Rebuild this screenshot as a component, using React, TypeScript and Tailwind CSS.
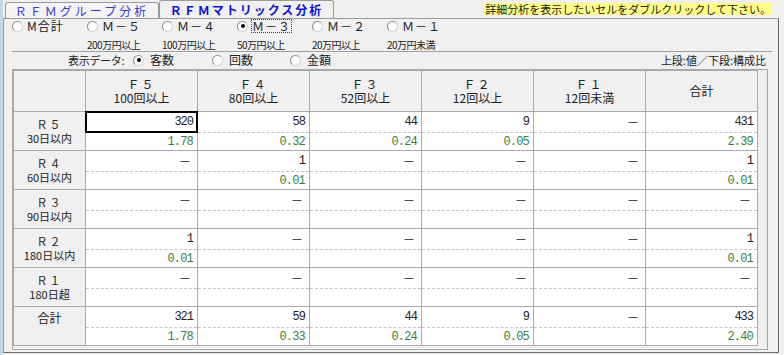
import React from "react";

const JP = "font-['MS_UI_Gothic','Noto_Sans_CJK_JP',sans-serif]";
const MONO = "font-['Liberation_Mono','DejaVu_Sans_Mono',monospace]";

type Cell = { v: string; p: string };

const COLS = [
  { k: "Ｆ５", s: "100回以上" },
  { k: "Ｆ４", s: "80回以上" },
  { k: "Ｆ３", s: "52回以上" },
  { k: "Ｆ２", s: "12回以上" },
  { k: "Ｆ１", s: "12回未満" },
];

const D = "－";
const dash: Cell = { v: D, p: "" };

const ROWS: { k: string; s: string; cells: Cell[] }[] = [
  {
    k: "Ｒ５",
    s: "30日以内",
    cells: [
      { v: "320", p: "1.78" },
      { v: "58", p: "0.32" },
      { v: "44", p: "0.24" },
      { v: "9", p: "0.05" },
      dash,
      { v: "431", p: "2.39" },
    ],
  },
  {
    k: "Ｒ４",
    s: "60日以内",
    cells: [dash, { v: "1", p: "0.01" }, dash, dash, dash, { v: "1", p: "0.01" }],
  },
  { k: "Ｒ３", s: "90日以内", cells: [dash, dash, dash, dash, dash, dash] },
  {
    k: "Ｒ２",
    s: "180日以内",
    cells: [{ v: "1", p: "0.01" }, dash, dash, dash, dash, { v: "1", p: "0.01" }],
  },
  { k: "Ｒ１", s: "180日超", cells: [dash, dash, dash, dash, dash, dash] },
  {
    k: "合計",
    s: "",
    cells: [
      { v: "321", p: "1.78" },
      { v: "59", p: "0.33" },
      { v: "44", p: "0.24" },
      { v: "9", p: "0.05" },
      dash,
      { v: "433", p: "2.40" },
    ],
  },
];

function Radio({ on }: { on?: boolean }) {
  return (
    <span className="inline-flex h-[11px] w-[11px] shrink-0 items-center justify-center rounded-full border border-t-[#8d8d8d] border-l-[#8d8d8d] border-r-[#d4d4d4] border-b-[#d4d4d4] bg-white">
      {on && <span className="h-[4px] w-[4px] rounded-full bg-black" />}
    </span>
  );
}

function Option({ label, sub, on, focus }: { label: string; sub?: string; on?: boolean; focus?: boolean }) {
  return (
    <div className="flex w-[75px] shrink-0 flex-col">
      <div className="flex h-[12px] items-center gap-[4px]">
        <Radio on={on} />
        <span
          className={
            "text-[12px] leading-[12px] tracking-[1px] text-[#222] " +
            (focus ? "outline outline-1 outline-dotted outline-[#444]" : "")
          }
        >
          {label}
        </span>
      </div>
      {sub && (
        <span className="mt-[7px] text-[10px] leading-[11px] tracking-[-0.5px] text-[#222]">{sub}</span>
      )}
    </div>
  );
}

function DataCell({ c, sel }: { c: Cell; sel?: boolean }) {
  return (
    <div className="flex flex-col bg-white">
      <div
        className={
          "flex h-[20px] items-center justify-end pr-[4px] text-[12px] tracking-[-1px] text-[#222] " +
          MONO +
          (sel ? " relative z-10 outline-2 outline-black -outline-offset-1" : "")
        }
      >
        {c.v === D ? <span className={JP + " mr-[2px] tracking-normal"}>{D}</span> : c.v}
      </div>
      <div className="border-t border-dashed border-[#c4c4c4]" />
      <div className={"flex h-[17px] items-center justify-end pr-[4px] text-[12px] tracking-[-0.8px] text-[#3a7d3f] " + MONO}>
        {c.p}
      </div>
    </div>
  );
}

export default function App() {
  return (
    <div className={"h-[355px] w-[784px] overflow-hidden bg-[#f0f0f0] text-black " + JP}>
      <div className="flex h-full flex-col border-l-[3px] border-[#c8d6e6]">
        {/* tab strip */}
        <div className="flex h-[18px] items-end pl-[2px]">
          <div className="flex h-[16px] w-[154px] items-center justify-center rounded-t-[3px] border border-b-0 border-[#9a9a9a] bg-[#f4f4f4] text-[12px] tracking-[3px] text-[#3a3ad0]">
            ＲＦＭグループ分析
          </div>
          <div className="-mb-px flex h-[19px] w-[175px] items-center justify-center rounded-t-[3px] border border-b-0 border-[#9a9a9a] bg-[#f0f0f0] text-[12px] font-bold tracking-[2px] text-[#1010d8]">
            ＲＦＭマトリックス分析
          </div>
          <div className="mb-[3px] ml-auto mr-[12px] mt-[3px] self-start bg-[#ffff88] px-[1px] text-[11px] leading-[12px] text-[#222]">
            詳細分析を表示したいセルをダブルクリックして下さい。
          </div>
        </div>

        {/* panel */}
        <div className="mb-[2px] mr-[5px] flex flex-1 flex-col border border-[#9a9a9a] border-r-[#696969] border-b-[#696969] pl-[8px]">
          <div className="flex pt-px">
            <Option label="M合計" />
            <Option label="Ｍ－５" sub="200万円以上" />
            <Option label="Ｍ－４" sub="100万円以上" />
            <Option label="Ｍ－３" sub="50万円以上" on focus />
            <Option label="Ｍ－２" sub="20万円以上" />
            <Option label="Ｍ－１" sub="20万円未満" />
          </div>
          <div className="mr-[6px] mt-[1px] border-t border-[#a0a0a0]" />

          <div className="flex h-[16px] items-center pr-[12px] text-[12px] leading-[12px] text-[#222]">
            <span className="ml-[56px] w-[65px] text-[11px] tracking-[-0.3px]">表示データ:</span>
            <div className="flex w-[79px] items-center gap-[6px]">
              <Radio on />
              <span>客数</span>
            </div>
            <div className="flex w-[78px] items-center gap-[6px]">
              <Radio />
              <span>回数</span>
            </div>
            <div className="flex items-center gap-[6px]">
              <Radio />
              <span>金額</span>
            </div>
            <span className="ml-auto text-[11px]">上段:値／下段:構成比</span>
          </div>

          {/* grid frame */}
          <div className="mr-[10px] mt-[1px] h-[281px] border border-[#a8a8a8] bg-[#f0f0f0]">
            <div className="grid w-fit grid-cols-[71px_repeat(6,111px)] grid-rows-[40px_repeat(6,38px)] gap-px bg-[#a9a9a9] p-px">
              <div className="bg-[#f0f0f0]" />
              {COLS.map((c) => (
                <div key={c.k} className="flex flex-col items-center justify-center bg-[#f0f0f0] text-[12px] leading-[14px] text-[#222]">
                  <span className="tracking-[2px]">{c.k}</span>
                  <span>{c.s}</span>
                </div>
              ))}
              <div className="flex items-center justify-center bg-[#f0f0f0] text-[12px] text-[#222]">合計</div>

              {ROWS.map((r, ri) => (
                <React.Fragment key={r.k}>
                  <div
                    className={
                      "flex flex-col items-center bg-[#f0f0f0] text-[11px] leading-[14px] text-[#222] " +
                      (r.s ? "justify-center" : "justify-start pt-[4px] text-[12px]")
                    }
                  >
                    <span className={r.s ? "tracking-[2px]" : ""}>{r.k}</span>
                    {r.s && <span>{r.s}</span>}
                  </div>
                  {r.cells.map((c, ci) => (
                    <DataCell key={ci} c={c} sel={ri === 0 && ci === 0} />
                  ))}
                </React.Fragment>
              ))}
            </div>
          </div>
        </div>
      </div>
    </div>
  );
}
